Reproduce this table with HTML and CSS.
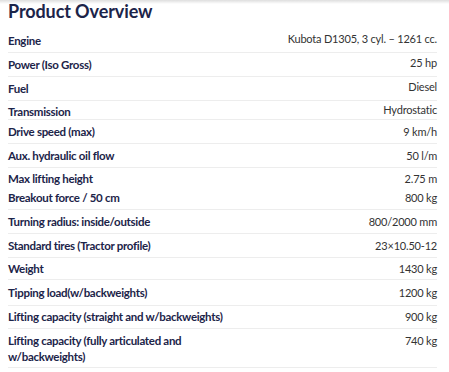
FILE: index.html
```html
<!DOCTYPE html>
<html lang="en">
<head>
<meta charset="utf-8">
<title>Product Overview</title>
<link rel="stylesheet" href="styles.css">
</head>
<body>
<div class="topshade"></div>
<section class="overview">
  <h2 class="overview__title">Product Overview</h2>
  <table class="specs">
    <tbody>
      <tr><th>Engine</th><td class="specs__val--up">Kubota D1305, 3 cyl. – 1261 cc.</td></tr>
      <tr><th>Power (Iso Gross)</th><td class="specs__val--up">25 hp</td></tr>
      <tr><th>Fuel</th><td class="specs__val--up">Diesel</td></tr>
      <tr class="specs__row--short"><th>Transmission</th><td class="specs__val--up">Hydrostatic</td></tr>
      <tr><th>Drive speed (max)</th><td>9 km/h</td></tr>
      <tr><th>Aux. hydraulic oil flow</th><td>50 l/m</td></tr>
      <tr class="specs__row--short specs__row--noline"><th>Max lifting height</th><td>2.75 m</td></tr>
      <tr class="specs__row--snug"><th>Breakout force / 50 cm</th><td>800 kg</td></tr>
      <tr><th>Turning radius: inside/outside</th><td>800/2000 mm</td></tr>
      <tr><th>Standard tires (Tractor profile)</th><td>23×10.50-12</td></tr>
      <tr class="specs__row--compact"><th>Weight</th><td>1430 kg</td></tr>
      <tr class="specs__row--roomy"><th>Tipping load(w/backweights)</th><td>1200 kg</td></tr>
      <tr class="specs__row--snug"><th>Lifting capacity (straight and w/backweights)</th><td>900 kg</td></tr>
      <tr class="specs__row--multi"><th>Lifting capacity (fully articulated and w/backweights)</th><td>740 kg</td></tr>
    </tbody>
  </table>
</section>
</body>
</html>
```
FILE: styles.css
```css
html, body {
  margin: 0;
  padding: 0;
  background: #fff;
}
body {
  font-family: "Lato", "Noto Sans", sans-serif;
  color: #333;
  position: relative;
}
.topshade {
  position: absolute;
  left: 0;
  right: 0;
  top: 0;
  height: 4px;
  background: linear-gradient(to bottom, rgba(0,0,0,0.13), rgba(0,0,0,0));
}
.overview {
  padding: 0 12px 0 8px;
}
.overview__title {
  margin: 0 0 7px;
  font-size: 18px;
  line-height: 22px;
  font-weight: 700;
  letter-spacing: -0.1px;
  color: #1c2449;
}
.specs {
  width: 100%;
  border-collapse: collapse;
}
.specs tr {
  border-bottom: 1px solid #ededed;
}
.specs th,
.specs td {
  line-height: 16px;
  padding: 4px 0 3px;
  vertical-align: top;
}
.specs th {
  width: 222px;
  text-align: left;
  font-size: 11.5px;
  letter-spacing: -0.3px;
  font-weight: 700;
  color: #1c2449;
}
.specs td {
  text-align: right;
  font-size: 11px;
  font-weight: 400;
  color: #333;
  letter-spacing: -0.2px;
}
.specs td.specs__val--up {
  padding-top: 2px;
  padding-bottom: 5px;
}
.specs__row--short th,
.specs__row--short td {
  padding: 3px 0 0;
  line-height: 15px;
}
.specs__row--short td.specs__val--up {
  padding: 1px 0 2px;
}
.specs tr.specs__row--noline {
  border-bottom-color: transparent;
}
.specs__row--snug th,
.specs__row--snug td {
  padding: 3px 0;
}
.specs__row--compact th,
.specs__row--compact td {
  padding: 3px 0 2px;
}
.specs__row--roomy th,
.specs__row--roomy td {
  padding: 5px 0 4px;
}
.specs__row--multi th,
.specs__row--multi td {
  padding: 4px 0 2px;
}
```
